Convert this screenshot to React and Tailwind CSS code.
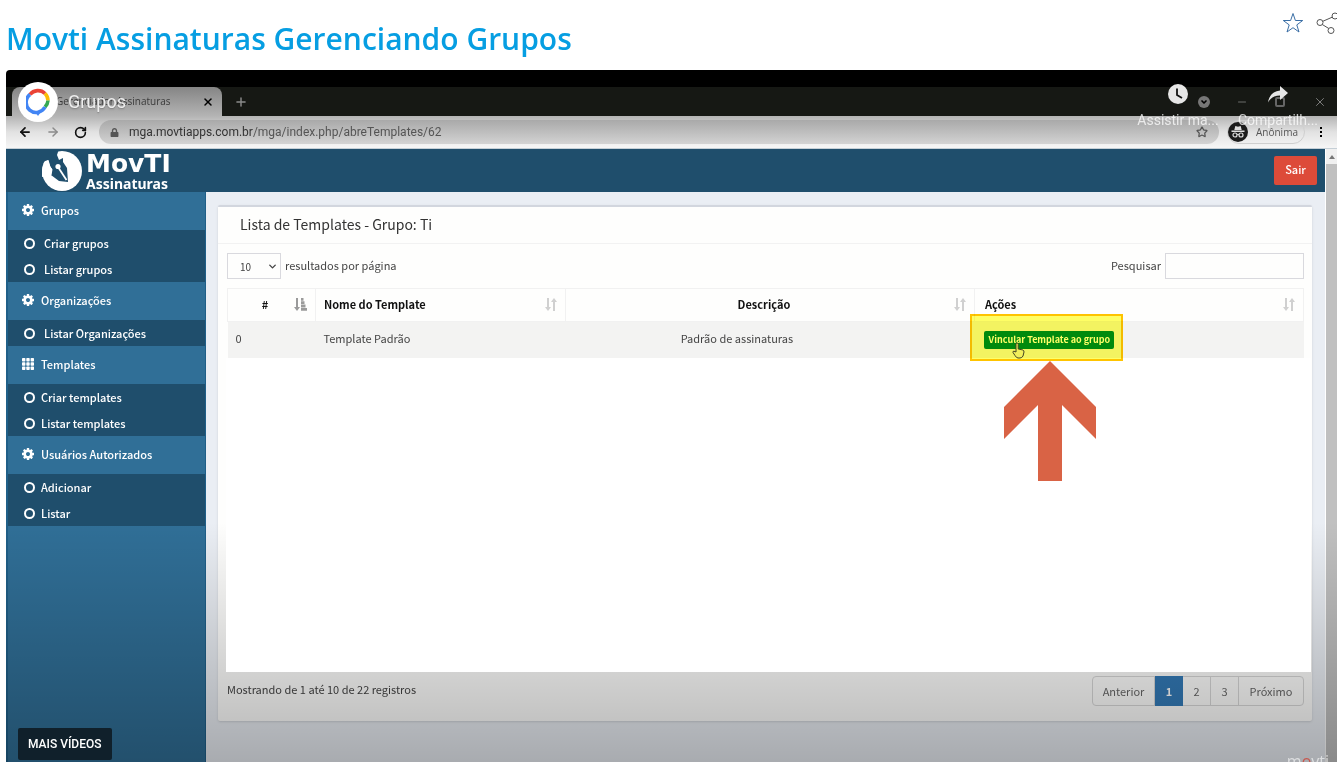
import { FaLock } from 'react-icons/fa'
import { ArrowLeft, ArrowRight, ChevronDown, Minus, Plus, RotateCw, Star, X } from 'lucide-react'

const menu = [
  { title: 'Grupos', icon: 'cog', wide: true, items: ['Criar grupos', 'Listar grupos'] },
  { title: 'Organizações', icon: 'cog', wide: true, items: ['Listar Organizações'] },
  { title: 'Templates', icon: 'grid', items: ['Criar templates', 'Listar templates'] },
  { title: 'Usuários Autorizados', icon: 'cog', items: ['Adicionar', 'Listar'] },
]

function CogIcon() {
  return (
    <svg viewBox="0 128 1536 1536" className="size-3 fill-current">
      <path d="M1024 896q0-106-75-181t-181-75-181 75-75 181 75 181 181 75 181-75 75-181zm512-109v222q0 12-8 23t-20 13l-185 28q-19 54-39 91 35 50 107 138 10 12 10 25t-9 23q-27 37-99 108t-94 71q-12 0-26-9l-138-108q-44 23-91 38-16 136-29 186-7 28-36 28h-222q-14 0-24.5-8.5t-11.5-21.5l-28-184q-49-16-90-37l-141 107q-10 9-25 9-14 0-25-11-126-114-165-168-7-10-7-23 0-12 8-23 15-21 51-66.5t54-70.5q-27-50-41-99l-183-27q-13-2-21-12.5t-8-23.5v-222q0-12 8-23t19-13l186-28q14-46 39-92-40-57-107-138-10-12-10-24 0-10 9-23 26-36 98.5-107.5t94.5-71.5q13 0 26 10l138 107q44-23 91-38 16-136 29-186 7-28 36-28h222q14 0 24.5 8.5t11.5 21.5l28 184q49 16 90 37l142-107q9-9 24-9 13 0 25 10 129 119 165 170 7 8 7 22 0 12-8 23-15 21-51 66.5t-54 70.5q26 50 41 98l183 28q13 2 21 12.5t8 23.5z" />
    </svg>
  )
}

function GridIcon() {
  return (
    <svg viewBox="0 0 12 12" className="size-3 fill-current">
      {[0, 4.3, 8.6].map((y) =>
        [0, 4.3, 8.6].map((x) => <rect key={x + '-' + y} x={x} y={y} width="3.4" height="3.4" rx="0.7" />)
      )}
    </svg>
  )
}

function SortIcon() {
  return (
    <svg viewBox="0 0 12 13" className="h-[13px] w-3 shrink-0 fill-[#d0d0d0]">
      <path d="M2 0h2v9h2l-3 4-3-4h2zM8 13h2V4h2L9 0 6 4h2z" />
    </svg>
  )
}

function SortActiveIcon() {
  return (
    <svg viewBox="0 0 13 13" className="size-[13px] shrink-0 fill-[#9a9a9a]">
      <path d="M2 0h2v9h2l-3 4-3-4h2zM7 0h2.500v2.800H7zM7 3.300h3.500v2.800H7zM7 6.600h4.500v2.800H7zM7 9.900h6v2.800H7z" />
    </svg>
  )
}

function MovtiMark() {
  return (
    <svg viewBox="0 0 40 40" className="size-10">
      <circle cx="20" cy="20" r="20" fill="#fff" />
      <path d="M-2 12L6 9 8 15 10 18 9 24 17 30 26 31 25 17 21 11V7L17 9 15 4 17 -2H-2Z" fill="#1f4e6c" />
      <path d="M0 19Q1 12 6.500 9L8.500 16 10.500 18.500 9.500 24 0 26Z" fill="#fff" />
      <circle cx="16" cy="15.500" r="2.600" fill="#fff" />
      <path d="M16 16L24.500 29" stroke="#fff" strokeWidth="1.800" />
    </svg>
  )
}

function ChannelAvatar() {
  return (
    <a href="#canal" aria-label="Canal" className="flex size-10 items-center justify-center rounded-full bg-white">
      <svg viewBox="0 0 24 28" className="h-7 w-6" fill="none" strokeWidth="3.6">
        <path d="M4 6.500A10 10 0 0 1 19 5.500" stroke="#ea4335" />
        <path d="M19 5.500A10 10 0 0 1 22 12.500" stroke="#fbbc05" />
        <path d="M22 12.500A10 10 0 0 1 19 19" stroke="#34a853" />
        <path d="M19 19A10 10 0 1 1 4 6.500" stroke="#4285f4" />
        <path d="M9.500 24.500h5l-2.500 3.500z" fill="#4285f4" stroke="none" />
      </svg>
    </a>
  )
}

function IncognitoIcon() {
  return (
    <svg viewBox="0 0 20 20" className="size-5 shrink-0">
      <circle cx="10" cy="10" r="10" fill="#1c1c1c" />
      <path d="M7.3 4l2.7.7 2.7-.7 1 4H6.3zM3.5 8.6h13v1.3h-13z" fill="#ddd" />
      <circle cx="7" cy="13" r="2" fill="none" stroke="#ddd" strokeWidth="1.2" />
      <circle cx="13" cy="13" r="2" fill="none" stroke="#ddd" strokeWidth="1.2" />
      <path d="M9 12.6q1-.8 2 0" fill="none" stroke="#ddd" />
    </svg>
  )
}

function BrowserBar() {
  return (
    <div className="font-['Open_Sans',sans-serif]">
      <div className="h-[17px] bg-black" />
      <div className="flex h-[29px] items-center bg-[#161814] text-[#8a8a8a]">
        <div className="ml-[6px] flex h-full w-[210px] items-center rounded-t-lg bg-linear-to-b from-[#858585] to-[#b4b4b4] pr-2 pl-[44px] text-[10px] text-[#3a3a3a]">
          <span className="flex-1 whitespace-nowrap">Gerenciador Assinaturas</span>
          <button aria-label="Fechar aba" className="text-black"><X className="size-3" strokeWidth={3} /></button>
        </div>
        <button aria-label="Nova aba" className="ml-3"><Plus className="size-[14px]" strokeWidth={2.5} /></button>
        <div className="ml-auto flex items-center pr-[10px]">
          <span className="mr-[26px] flex size-3 items-center justify-center rounded-full bg-[#777]">
            <ChevronDown className="size-2 text-black" strokeWidth={5} />
          </span>
          <Minus className="mr-[27px] size-3" strokeWidth={1.5} />
          <span className="mr-[28px] size-[10px] rounded-xs border-2 border-[#666]" />
          <X className="size-[14px]" strokeWidth={1.5} />
        </div>
      </div>
      <div className="flex h-[33px] items-center border-b border-[#c5cfd6] bg-linear-to-b from-[#b4b4b4] via-[#e2e2e2] to-[#f6f6f6] pr-2 pl-3 text-[#111]">
        <ArrowLeft className="size-[14px]" strokeWidth={3} />
        <ArrowRight className="ml-[14px] size-[14px] text-[#8b8b8b]" strokeWidth={2.5} />
        <RotateCw className="ml-[14px] size-[13px]" strokeWidth={3} />
        <div className="ml-3 flex h-6 flex-1 items-center rounded-full bg-linear-to-b from-[#a9a9a9] to-[#d3d3d3] px-[11px] font-['Roboto',sans-serif] text-xs text-[#555]">
          <FaLock className="mr-[10px] size-[9px]" />
          <span className="flex-1"><span className="text-[#333]">mga.movtiapps.com.br</span>/mga/index.php/abreTemplates/62</span>
          <Star className="size-3" strokeWidth={2.5} />
        </div>
        <div className="mr-2 ml-2 flex h-6 w-[78px] items-center gap-2 rounded-full border border-[#cfcfcf] text-[10px] text-[#555]">
          <IncognitoIcon />
          Anônima
        </div>
        <div className="flex w-4 flex-col items-center gap-[2px]">
          <span className="size-[2px] bg-black" />
          <span className="size-[2px] bg-black" />
          <span className="size-[2px] bg-black" />
        </div>
      </div>
    </div>
  )
}

function PlayerOverlay() {
  return (
    <>
      <div className="absolute top-3 left-3 flex items-center gap-[10px] font-['Roboto',sans-serif]">
        <ChannelAvatar />
        <a href="#video" className="text-lg text-[#eee] text-shadow-sm">Grupos</a>
      </div>
      <div className="absolute top-[14px] right-[19px] flex gap-5 font-['Roboto',sans-serif] text-sm leading-4 whitespace-nowrap text-white/75 text-shadow-xs">
        <button aria-label="Assistir mais tarde" className="flex w-20 flex-col items-center gap-2">
          <svg viewBox="0 0 20 20" className="size-5">
            <circle cx="10" cy="10" r="10" fill="#e6e6e6" />
            <path d="M9 4.500V11l5 3" fill="none" stroke="#111" strokeWidth="1.8" />
          </svg>
          Assistir ma...
        </button>
        <button aria-label="Compartilhar" className="flex w-20 flex-col items-center gap-2">
          <svg viewBox="0 0 20 20" className="size-5 fill-[#e6e6e6]">
            <path d="M12 2l8 7-8 7v-4.500C6.500 11.500 3 13.500 0 18.500 1 12 4.500 7.500 12 6.500z" />
          </svg>
          Compartilh...
        </button>
      </div>
      <button className="absolute bottom-[2px] left-3 h-8 rounded-xs bg-[#10202b] px-[10px] font-['Roboto',sans-serif] text-xs font-medium text-white">
        MAIS VÍDEOS
      </button>
      <div className="absolute right-2 bottom-0 h-[9px] overflow-hidden font-['Open_Sans',sans-serif] text-base leading-4 text-white/60">
        m<span className="text-[#c8574e]">o</span>vti
      </div>
    </>
  )
}

function Sidebar() {
  return (
    <aside className="w-[200px] shrink-0 border-r border-l-2 border-[#1f5f88] bg-[#306f97] text-[11px] font-medium text-white">
      {menu.map((group) => (
        <nav key={group.title}>
          <h2 className="flex h-[38px] items-center gap-[7px] pb-[2px] pl-[14px]">
            {group.icon === 'cog' ? <CogIcon /> : <GridIcon />}
            {group.title}
          </h2>
          <ul className="bg-[#1f4e6c]">
            {group.items.map((item) => (
              <li key={item}>
                <a href="#menu" className="flex h-[26px] items-center pl-4">
                  <span className="size-[11px] rounded-full border-2 border-white" />
                  <span className={group.wide ? 'ml-[9px]' : 'ml-[6px]'}>{item}</span>
                </a>
              </li>
            ))}
          </ul>
        </nav>
      ))}
    </aside>
  )
}

// yellow marker, mouse pointer and arrow drawn over the action button
function Highlight() {
  return (
    <>
      <div className="pointer-events-none absolute -top-2 -left-1 z-20 h-[47px] w-[153px] border-2 border-[#ffc400] bg-[#ffff66] mix-blend-multiply" />
      <div className="pointer-events-none absolute top-5 left-[30px] z-20 w-[92px]">
        <svg viewBox="0 0 13 17" className="ml-2 h-[17px] w-[13px]">
          <path d="M4 10V2.200Q4 1 5 1T6.200 2.200V7L11 8Q12 8.500 12 10L11 14Q10 16 8 16H6Q4.500 16 3 13.500L1 10.500Q.7 9 2 9.200Z" fill="#f1ee5c" stroke="#444422" />
        </svg>
        <svg viewBox="0 0 92 120" className="mt-[2px] h-[120px] w-[92px] fill-[#d96345]">
          <path d="M46 0L92 46V78L58 44V120H34V44L0 78V46Z" />
        </svg>
      </div>
    </>
  )
}

function TemplatesTable() {
  return (
    <table className="w-full table-fixed border-collapse text-left">
      <colgroup>
        <col className="w-[88px]" />
        <col className="w-[250px]" />
        <col className="w-[38%]" />
        <col />
      </colgroup>
      <thead className="text-[#111]">
        <tr className="h-[33px]">
          <th className="border border-[#f1f1f1] px-2 pb-[2px]">
            <div className="flex items-center"><span className="flex-1 text-center">#</span><SortActiveIcon /></div>
          </th>
          <th className="border border-[#f1f1f1] px-2 pb-[2px]">
            <div className="flex items-center justify-between">Nome do Template<SortIcon /></div>
          </th>
          <th className="border border-[#f1f1f1] px-2 pb-[2px]">
            <div className="flex items-center"><span className="flex-1 text-center">Descrição</span><SortIcon /></div>
          </th>
          <th className="border border-[#f1f1f1] px-2 pb-[2px]">
            <div className="flex items-center justify-between pl-[2px]">Ações<SortIcon /></div>
          </th>
        </tr>
      </thead>
      <tbody>
        <tr className="h-9 bg-[#f3f3f2]">
          <td className="px-2 pb-1">0</td>
          <td className="px-2 pb-1">Template Padrão</td>
          <td className="pr-[66px] pb-1 text-center">Padrão de assinaturas</td>
          <td className="relative pl-[10px]">
            <button className="block h-[18px] w-[130px] rounded-xs bg-[#008a1f] text-[9px] leading-[18px] font-bold whitespace-nowrap text-white">
              Vincular Template ao grupo
            </button>
            <Highlight />
          </td>
        </tr>
      </tbody>
    </table>
  )
}

function Pagination() {
  const page = 'h-full border-r border-[#d8d8d8]'
  return (
    <div className="flex h-[30px] rounded-sm border border-[#d8d8d8] text-[#666]">
      <button className={page + ' w-[62px]'}>Anterior</button>
      <button className="-my-px h-[30px] w-7 bg-[#337ab7] font-bold text-white">1</button>
      <button className={page + ' w-7'}>2</button>
      <button className={page + ' w-7'}>3</button>
      <button className="w-[64px]">Próximo</button>
    </div>
  )
}

function Card() {
  return (
    <section className="flex flex-1 flex-col rounded-xs border-t-2 border-[#d2d6de] bg-[#fefefd] shadow-sm">
      <h2 className="flex h-[37px] items-center border-b border-[#f2f2f2] pb-[2px] pl-[22px] text-sm text-[#333]">
        Lista de Templates - Grupo: Ti
      </h2>
      <div className="flex flex-1 flex-col pr-2 pl-[9px] text-[11px] text-[#444]">
        <div className="flex h-11 items-center justify-between">
          <label className="relative flex items-center gap-1">
            <select className="h-[26px] w-[54px] appearance-none border border-[#d9d9de] pl-3 text-[10px]">
              <option>10</option>
            </select>
            <ChevronDown className="pointer-events-none absolute left-10 size-[11px]" strokeWidth={3} />
            <span className="pb-[2px]">resultados por página</span>
          </label>
          <label className="flex items-center gap-1">
            <span className="pb-[2px]">Pesquisar</span>
            <input type="text" className="h-[26px] w-[139px] border border-[#d9d9de]" />
          </label>
        </div>
        <TemplatesTable />
        <div className="relative z-10 -mr-[7px] -ml-px min-h-40 flex-1 bg-white" />
        <div className="flex items-start justify-between pt-1 pb-[15px]">
          <p className="pt-[5px]">Mostrando de 1 até 10 de 22 registros</p>
          <Pagination />
        </div>
      </div>
    </section>
  )
}

function App() {
  return (
    <div className="flex min-h-screen flex-col bg-white">
      <header className="flex h-[70px] justify-between overflow-hidden pl-[6px]">
        <h1 className="pt-[18px] font-['Open_Sans',sans-serif] text-3xl leading-[42px] font-semibold text-[#069ee2]">
          Movti Assinaturas Gerenciando Grupos
        </h1>
        <div className="-mr-[1px] flex gap-3 pt-3 text-[#3a6ea5]">
          <button aria-label="Favorito" className="h-[22px]">
            <svg viewBox="0 0 22 22" className="size-[22px]" fill="none" stroke="currentColor">
              <path d="M11 1.500L13.400 8.500H20.700L14.800 12.900 17 20 11 15.700 5 20 7.200 12.900 1.300 8.500H8.600Z" />
            </svg>
          </button>
          <button aria-label="Compartilhar página" className="h-[22px]">
            <svg viewBox="0 0 22 22" className="size-[22px]" fill="none" stroke="#555">
              <circle cx="4" cy="10.500" r="3" />
              <circle cx="19" cy="4" r="3" />
              <circle cx="15" cy="18.500" r="3" />
              <path d="M6.800 9.300L16.200 5.200M6.300 12.500L12.800 16.500" />
            </svg>
          </button>
        </div>
      </header>

      <main className="relative ml-[6px] flex flex-1 flex-col overflow-hidden rounded-tl-sm">
        <BrowserBar />
        <div className="relative flex flex-1 font-['Noto_Sans_CJK_SC','Open_Sans',sans-serif]">
          <div className="flex flex-1 flex-col">
            <div className="flex h-[43px] items-center justify-between bg-[#1f4e6c] pr-2 pl-9 text-white">
              <div className="flex items-center gap-1">
                <MovtiMark />
                <div className="pt-1">
                  <p className="font-['DejaVu_Sans',sans-serif] text-[25px] leading-[22px] font-bold">MovTI</p>
                  <p className="font-['Noto_Sans',sans-serif] text-sm leading-[18px] font-bold">Assinaturas</p>
                </div>
              </div>
              <button className="h-[29px] w-[43px] rounded-xs bg-[#dd4b39] pb-[2px] text-[11px] font-medium">Sair</button>
            </div>
            <div className="flex flex-1">
              <Sidebar />
              <div className="flex flex-1 flex-col bg-[#eaeef4] pt-[13px] pr-[13px] pb-[41px] pl-3">
                <Card />
              </div>
            </div>
          </div>
          <div className="w-3 border-l border-white bg-[#c0c0c0]">
            <div className="flex h-[15px] items-center justify-center bg-[#f0f0f0]">
              <svg viewBox="0 0 6 4" className="h-1 w-[6px] fill-[#777]"><path d="M3 0L6 4H0Z" /></svg>
            </div>
          </div>
          <div className="pointer-events-none absolute inset-x-0 bottom-0 h-60 bg-linear-to-b from-transparent to-black/28" />
        </div>
        <PlayerOverlay />
      </main>
    </div>
  )
}

export default App
